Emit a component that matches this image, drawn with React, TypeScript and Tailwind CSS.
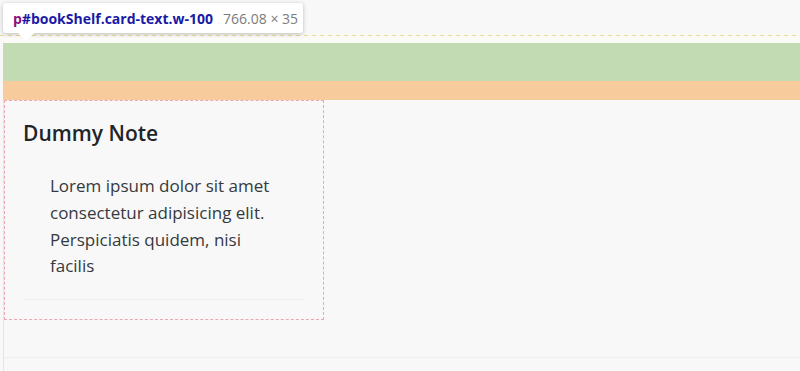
export default function App() {
  return (
    <div
      className="relative h-[371px] w-[800px] overflow-hidden bg-[#f8f8f8] text-[#212529]"
      style={{ fontFamily: '"Segoe UI", "Open Sans", "Noto Sans", sans-serif' }}
    >
      {/* devtools highlight of the bookshelf paragraph */}
      <div className="h-[35px]" />
      <div className="h-px bg-[repeating-linear-gradient(90deg,#f0d88e_0_4px,transparent_4px_8px)]" />
      <div className="h-[7px] bg-[#fafaf6]" />
      <div className="ml-[3px] h-[38px] bg-[#c2dbb3]" />
      <div className="ml-[3px] h-[19px] bg-[#f8cb9c]" />

      <div className="ml-[3px] h-[271px] border-l border-[#e6e6e6]">
        <div className="w-[320px] border border-dashed border-[#eaa7b2] px-[18px] pt-[20px]">
          <h5 className="text-[21px] font-semibold leading-[1.2]">Dummy Note</h5>
          <p className="ml-[27px] mt-[27px] w-[235px] text-[17px] leading-[26.7px] text-[#343a40]">
            Lorem ipsum dolor sit amet consectetur adipisicing elit. Perspiciatis quidem, nisi facilis
          </p>
          <div className="mt-[19px] border-t border-[#ececec]" />
          <div className="h-[19px]" />
        </div>
        <div className="mt-[37px] border-t border-[#efefef]" />
      </div>

      {/* inspector tooltip */}
      <div className="absolute left-[3px] top-[3px] flex h-[30px] w-[300px] items-center gap-[10px] whitespace-nowrap rounded-[3px] bg-white px-[10px] shadow-[0_1px_4px_rgba(0,0,0,0.25)]">
        <span className="text-[14px] font-bold">
          <span className="text-[#881280]">p</span>
          <span className="text-[#1a1aa6]">#bookShelf.card-text.w-100</span>
        </span>
        <span className="text-[14px] text-[#7b7b7b]">766.08 × 35</span>
        <div className="absolute left-[15px] top-[30px] h-0 w-0 border-x-[8px] border-t-[8px] border-x-transparent border-t-white" />
      </div>
    </div>
  )
}
